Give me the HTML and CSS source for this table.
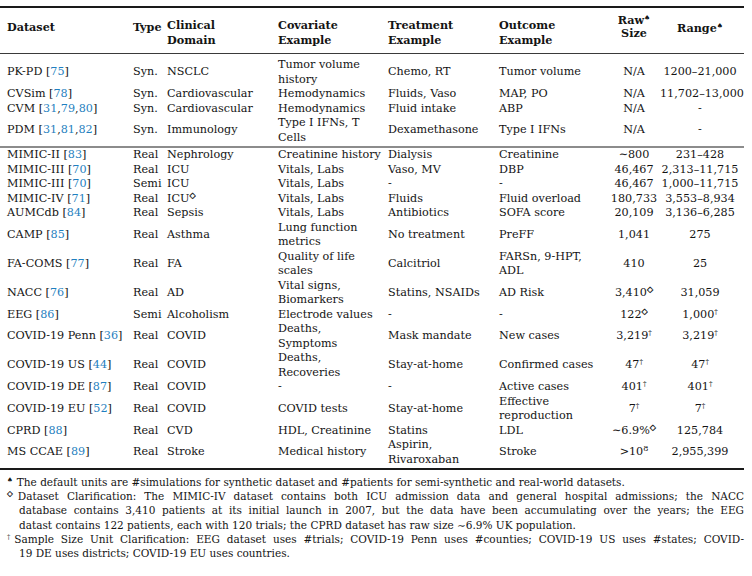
FILE: index.html
```html
<!DOCTYPE html>
<html lang="en">
<head>
  <meta charset="UTF-8">
  <meta name="viewport" content="width=device-width, initial-scale=1.0">
  <title>Dataset summary table</title>
  <link rel="stylesheet" href="styles.css">
</head>
<body>
  <div class="page">
    <table class="data">
      <colgroup>
        <col class="c-name">
        <col class="c-type">
        <col class="c-domain">
        <col class="c-cov">
        <col class="c-treat">
        <col class="c-out">
        <col class="c-raw">
        <col class="c-range">
      </colgroup>
      <thead>
        <tr>
          <th class="first one">Dataset</th>
          <th class="one">Type</th>
          <th>Clinical<br>Domain</th>
          <th>Covariate<br>Example</th>
          <th>Treatment<br>Example</th>
          <th>Outcome<br>Example</th>
          <th class="num raw">Raw<sup>♠</sup><br>Size</th>
          <th class="num range">Range<sup>♠</sup></th>
        </tr>
      </thead>

      <!-- synthetic -->
      <tbody class="syn">
        <tr>
          <td class="first">PK-PD [<span class="cite">75</span>]</td>
          <td>Syn.</td>
          <td>NSCLC</td>
          <td>Tumor volume<br>history</td>
          <td>Chemo, RT</td>
          <td>Tumor volume</td>
          <td class="num">N/A</td>
          <td class="num">1200–21,000</td>
        </tr>
        <tr>
          <td class="first">CVSim [<span class="cite">78</span>]</td>
          <td>Syn.</td>
          <td>Cardiovascular</td>
          <td>Hemodynamics</td>
          <td>Fluids, Vaso</td>
          <td>MAP, PO</td>
          <td class="num">N/A</td>
          <td class="num">11,702–13,000</td>
        </tr>
        <tr>
          <td class="first">CVM [<span class="cite">31</span>,<span class="cite">79</span>,<span class="cite">80</span>]</td>
          <td>Syn.</td>
          <td>Cardiovascular</td>
          <td>Hemodynamics</td>
          <td>Fluid intake</td>
          <td>ABP</td>
          <td class="num">N/A</td>
          <td class="num">-</td>
        </tr>
        <tr>
          <td class="first">PDM [<span class="cite">31</span>,<span class="cite">81</span>,<span class="cite">82</span>]</td>
          <td>Syn.</td>
          <td>Immunology</td>
          <td>Type I IFNs, T<br>Cells</td>
          <td>Dexamethasone</td>
          <td>Type I IFNs</td>
          <td class="num">N/A</td>
          <td class="num">-</td>
        </tr>
      </tbody>

      <!-- semi-synthetic and real-world -->
      <tbody class="real">
        <tr>
          <td class="first">MIMIC-II [<span class="cite">83</span>]</td>
          <td>Real</td>
          <td>Nephrology</td>
          <td>Creatinine history</td>
          <td>Dialysis</td>
          <td>Creatinine</td>
          <td class="num">∼800</td>
          <td class="num">231–428</td>
        </tr>
        <tr>
          <td class="first">MIMIC-III [<span class="cite">70</span>]</td>
          <td>Real</td>
          <td>ICU</td>
          <td>Vitals, Labs</td>
          <td>Vaso, MV</td>
          <td>DBP</td>
          <td class="num">46,467</td>
          <td class="num">2,313–11,715</td>
        </tr>
        <tr>
          <td class="first">MIMIC-III [<span class="cite">70</span>]</td>
          <td>Semi</td>
          <td>ICU</td>
          <td>Vitals, Labs</td>
          <td>-</td>
          <td>-</td>
          <td class="num">46,467</td>
          <td class="num">1,000–11,715</td>
        </tr>
        <tr>
          <td class="first">MIMIC-IV [<span class="cite">71</span>]</td>
          <td>Real</td>
          <td>ICU<sup class="dia">◇</sup></td>
          <td>Vitals, Labs</td>
          <td>Fluids</td>
          <td>Fluid overload</td>
          <td class="num">180,733</td>
          <td class="num">3,553–8,934</td>
        </tr>
        <tr>
          <td class="first">AUMCdb [<span class="cite">84</span>]</td>
          <td>Real</td>
          <td>Sepsis</td>
          <td>Vitals, Labs</td>
          <td>Antibiotics</td>
          <td>SOFA score</td>
          <td class="num">20,109</td>
          <td class="num">3,136–6,285</td>
        </tr>
        <tr>
          <td class="first">CAMP [<span class="cite">85</span>]</td>
          <td>Real</td>
          <td>Asthma</td>
          <td>Lung function<br>metrics</td>
          <td>No treatment</td>
          <td>PreFF</td>
          <td class="num">1,041</td>
          <td class="num">275</td>
        </tr>
        <tr>
          <td class="first">FA-COMS [<span class="cite">77</span>]</td>
          <td>Real</td>
          <td>FA</td>
          <td>Quality of life<br>scales</td>
          <td>Calcitriol</td>
          <td>FARSn, 9-HPT,<br>ADL</td>
          <td class="num">410</td>
          <td class="num">25</td>
        </tr>
        <tr>
          <td class="first">NACC [<span class="cite">76</span>]</td>
          <td>Real</td>
          <td>AD</td>
          <td>Vital signs,<br>Biomarkers</td>
          <td>Statins, NSAIDs</td>
          <td>AD Risk</td>
          <td class="num">3,410<sup class="dia">◇</sup></td>
          <td class="num">31,059</td>
        </tr>
        <tr>
          <td class="first">EEG [<span class="cite">86</span>]</td>
          <td>Semi</td>
          <td>Alcoholism</td>
          <td>Electrode values</td>
          <td>-</td>
          <td>-</td>
          <td class="num">122<sup class="dia">◇</sup></td>
          <td class="num">1,000<sup>†</sup></td>
        </tr>
        <tr>
          <td class="first">COVID-19 Penn [<span class="cite">36</span>]</td>
          <td>Real</td>
          <td>COVID</td>
          <td>Deaths,<br>Symptoms</td>
          <td>Mask mandate</td>
          <td>New cases</td>
          <td class="num">3,219<sup>†</sup></td>
          <td class="num">3,219<sup>†</sup></td>
        </tr>
        <tr>
          <td class="first">COVID-19 US [<span class="cite">44</span>]</td>
          <td>Real</td>
          <td>COVID</td>
          <td>Deaths,<br>Recoveries</td>
          <td>Stay-at-home</td>
          <td>Confirmed cases</td>
          <td class="num">47<sup>†</sup></td>
          <td class="num">47<sup>†</sup></td>
        </tr>
        <tr>
          <td class="first">COVID-19 DE [<span class="cite">87</span>]</td>
          <td>Real</td>
          <td>COVID</td>
          <td>-</td>
          <td>-</td>
          <td>Active cases</td>
          <td class="num">401<sup>†</sup></td>
          <td class="num">401<sup>†</sup></td>
        </tr>
        <tr>
          <td class="first">COVID-19 EU [<span class="cite">52</span>]</td>
          <td>Real</td>
          <td>COVID</td>
          <td>COVID tests</td>
          <td>Stay-at-home</td>
          <td>Effective<br>reproduction</td>
          <td class="num">7<sup>†</sup></td>
          <td class="num">7<sup>†</sup></td>
        </tr>
        <tr>
          <td class="first">CPRD [<span class="cite">88</span>]</td>
          <td>Real</td>
          <td>CVD</td>
          <td>HDL, Creatinine</td>
          <td>Statins</td>
          <td>LDL</td>
          <td class="num">∼6.9%<sup class="dia">◇</sup></td>
          <td class="num">125,784</td>
        </tr>
        <tr>
          <td class="first">MS CCAE [<span class="cite">89</span>]</td>
          <td>Real</td>
          <td>Stroke</td>
          <td>Medical history</td>
          <td>Aspirin,<br>Rivaroxaban</td>
          <td>Stroke</td>
          <td class="num">&gt;10<sup class="exp">8</sup></td>
          <td class="num">2,955,399</td>
        </tr>
      </tbody>
    </table>

    <!-- footnote lines are set by hand to keep the print line breaks -->
    <div class="notes">
      <p>
        <span class="ln last"><sup class="mark">♠</sup>The default units are #simulations for synthetic dataset and #patients for semi-synthetic and real-world datasets.</span>
      </p>
      <p>
        <span class="ln"><sup class="mark dia">◇</sup>Dataset Clarification: The MIMIC-IV dataset contains both ICU admission data and general hospital admissions; the NACC</span>
        <span class="ln">database contains 3,410 patients at its initial launch in 2007, but the data have been accumulating over the years; the EEG</span>
        <span class="ln last">datast contains 122 patients, each with 120 trials; the CPRD dataset has raw size ∼6.9% UK population.</span>
      </p>
      <p>
        <span class="ln"><sup class="mark">†</sup>Sample Size Unit Clarification: EEG dataset uses #trials; COVID-19 Penn uses #counties; COVID-19 US uses #states; COVID-</span>
        <span class="ln last">19 DE uses districts; COVID-19 EU uses countries.</span>
      </p>
    </div>
  </div>
</body>
</html>
```

FILE: styles.css
```css
:root {
  --ink: #141414;
  --cite: #1f7fc0;
  --rule: #1a1a1a;
  --mid-rule: #8c8c8c;
}

body {
  margin: 0;
  font-family: "DejaVu Serif", "Liberation Serif", serif;
  font-size: 11.2px;
  color: var(--ink);
  background: #fff;
}

.page {
  width: 744px;
  padding-top: 6px;
}

/* table */
.data {
  width: 744px;
  border-collapse: separate;
  border-spacing: 0;
  table-layout: fixed;
  border-top: 2px solid var(--rule);
  border-bottom: 2px solid var(--rule);
}

.c-name { width: 128px; }
.c-type { width: 34px; }
.c-domain { width: 111px; }
.c-cov { width: 110px; }
.c-treat { width: 111px; }
.c-out { width: 114px; }
.c-raw { width: 52px; }
.c-range { width: 84px; }

th,
td {
  padding: 0 0 0 5px;
  text-align: left;
  white-space: nowrap;
  line-height: 14.5px;
}

td {
  vertical-align: middle;
}

th {
  vertical-align: top;
  font-weight: bold;
  line-height: 15px;
  padding-top: 10px;
  padding-bottom: 5px;
  border-bottom: 1px solid #3a3a3a;
}

th.one { padding-top: 12px; }

th.raw {
  padding-top: 6px;
  line-height: 13px;
}

th.range { padding-top: 13px; }

th.first,
td.first { padding-left: 7px; }

th.num,
td.num {
  text-align: center;
  padding-left: 0;
}

td.num:last-child,
th.num:last-child { padding-right: 4px; }

.syn tr:first-child td { padding-top: 4px; }
.syn tr:last-child td { padding-bottom: 1px; }

.real tr:first-child td { border-top: 2px solid var(--mid-rule); }
.real tr:last-child td { padding-bottom: 1px; }

.cite { color: var(--cite); }

sup {
  font-size: 0.62em;
  line-height: 0;
  vertical-align: 0.55em;
  font-weight: normal;
}

sup.dia {
  font-family: "DejaVu Sans", sans-serif;
  font-size: 0.72em;
  vertical-align: 0.5em;
  -webkit-text-stroke: 0.3px var(--ink);
}

sup.exp {
  font-size: 0.72em;
  vertical-align: 0.5em;
}

/* footnotes */
.notes {
  width: 744px;
  padding-top: 5px;
  font-size: 10.5px;
}

.notes p {
  margin: 0;
  padding-left: 19px;
}

.notes .ln {
  display: block;
  white-space: nowrap;
  line-height: 14.2px;
  text-align: justify;
  text-align-last: justify;
}

.notes .ln:first-child {
  margin-left: -12px;
}

.notes .ln.last {
  text-align-last: left;
}

.notes .mark {
  display: inline-block;
  margin-right: 4px;
}

.notes .mark.dia {
  margin-right: 5px;
}
```
